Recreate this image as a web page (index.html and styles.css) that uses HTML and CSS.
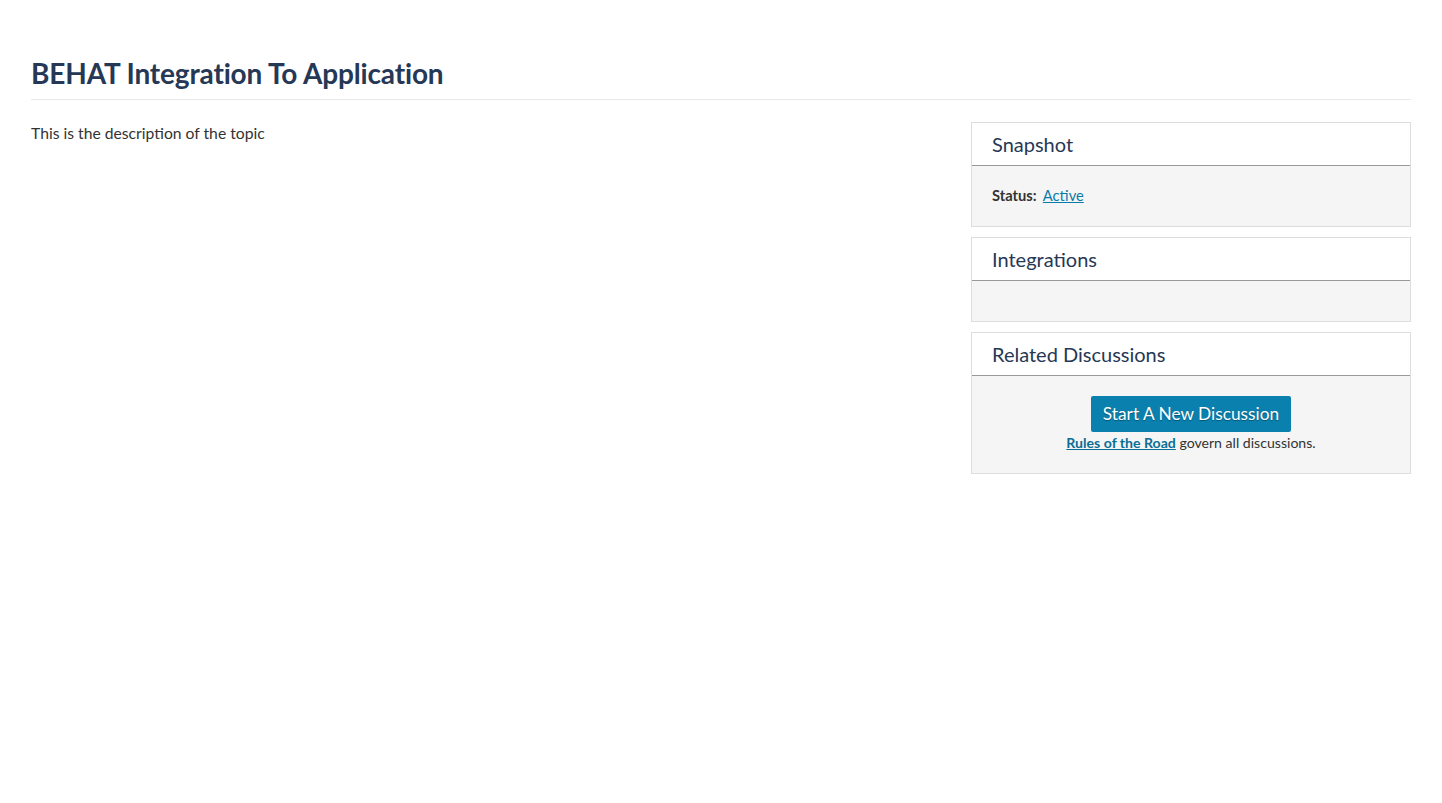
FILE: index.html
```html
<!DOCTYPE html>
<html lang="en">
<head>
<meta charset="utf-8">
<title>BEHAT Integration To Application</title>
<link rel="stylesheet" href="styles.css">
</head>
<body>
<div class="page">
  <h1 class="title">BEHAT Integration To Application</h1>
  <div class="layout">
    <div class="main">
      <p class="desc">This is the description of the topic</p>
    </div>
    <aside class="sidebar">
      <section class="panel">
        <h2 class="panel-head">Snapshot</h2>
        <div class="panel-body">
          <div class="status"><span class="label">Status:</span> <a href="#" class="link">Active</a></div>
        </div>
      </section>
      <section class="panel">
        <h2 class="panel-head">Integrations</h2>
        <div class="panel-body empty"></div>
      </section>
      <section class="panel">
        <h2 class="panel-head">Related Discussions</h2>
        <div class="panel-body center">
          <a href="#" class="btn">Start A New Discussion</a>
          <div class="rules"><a href="#" class="rules-link">Rules of the Road</a> govern all discussions.</div>
        </div>
      </section>
    </aside>
  </div>
</div>
</body>
</html>
```
FILE: styles.css
```css
* { box-sizing: border-box; }
html, body { margin: 0; padding: 0; background: #fff; }
body {
  font-family: Lato, "Open Sans", sans-serif;
  color: #333;
  font-size: 15px;
}
.page {
  padding: 53px 31px 0 31px;
}
.title {
  margin: 0;
  font-size: 28px;
  font-weight: 700;
  color: #263855;
  line-height: 40px;
  padding-bottom: 6px;
  border-bottom: 1px solid #e8e8e8;
  letter-spacing: -0.15px;
}
.layout {
  display: flex;
  justify-content: space-between;
  margin-top: 22px;
}
.main { flex: 1; }
.desc {
  margin: 1px 0 0 0;
  font-size: 15.7px;
  line-height: 21px;
  color: #333;
}
.sidebar {
  width: 440px;
  display: flex;
  flex-direction: column;
  gap: 10px;
}
.panel {
  border: 1px solid #ddd;
  background: #f5f5f5;
}
.panel-head {
  margin: 0;
  background: #fff;
  font-size: 20px;
  font-weight: 400;
  color: #263855;
  line-height: 24px;
  padding: 9px 20px 9px 20px;
  border-bottom: 1px solid #999;
}
.panel-body {
  padding: 19px 20px 20px 20px;
  min-height: 40px;
}
.status {
  font-size: 14.7px;
  line-height: 21px;
}
.label {
  font-weight: 700;
  color: #333;
  margin-right: 3px;
}
.link {
  color: #0a7aa8;
  text-decoration: underline;
}
.center {
  display: flex;
  flex-direction: column;
  align-items: center;
  padding-top: 20px;
  padding-bottom: 20px;
}
.btn {
  display: block;
  background: #0a80ae;
  color: #fff;
  text-decoration: none;
  font-size: 17.3px;
  line-height: 20px;
  padding: 8px 0;
  border-radius: 2px;
  text-shadow: 0 1px 1px rgba(0,0,0,0.35);
  width: 200px;
  text-align: center;
  white-space: nowrap;
}
.rules {
  margin-top: 1px;
  font-size: 14.1px;
  line-height: 20px;
  color: #333;
}
.rules-link {
  color: #0a6e96;
  font-weight: 700;
  text-decoration: underline;
}
```
